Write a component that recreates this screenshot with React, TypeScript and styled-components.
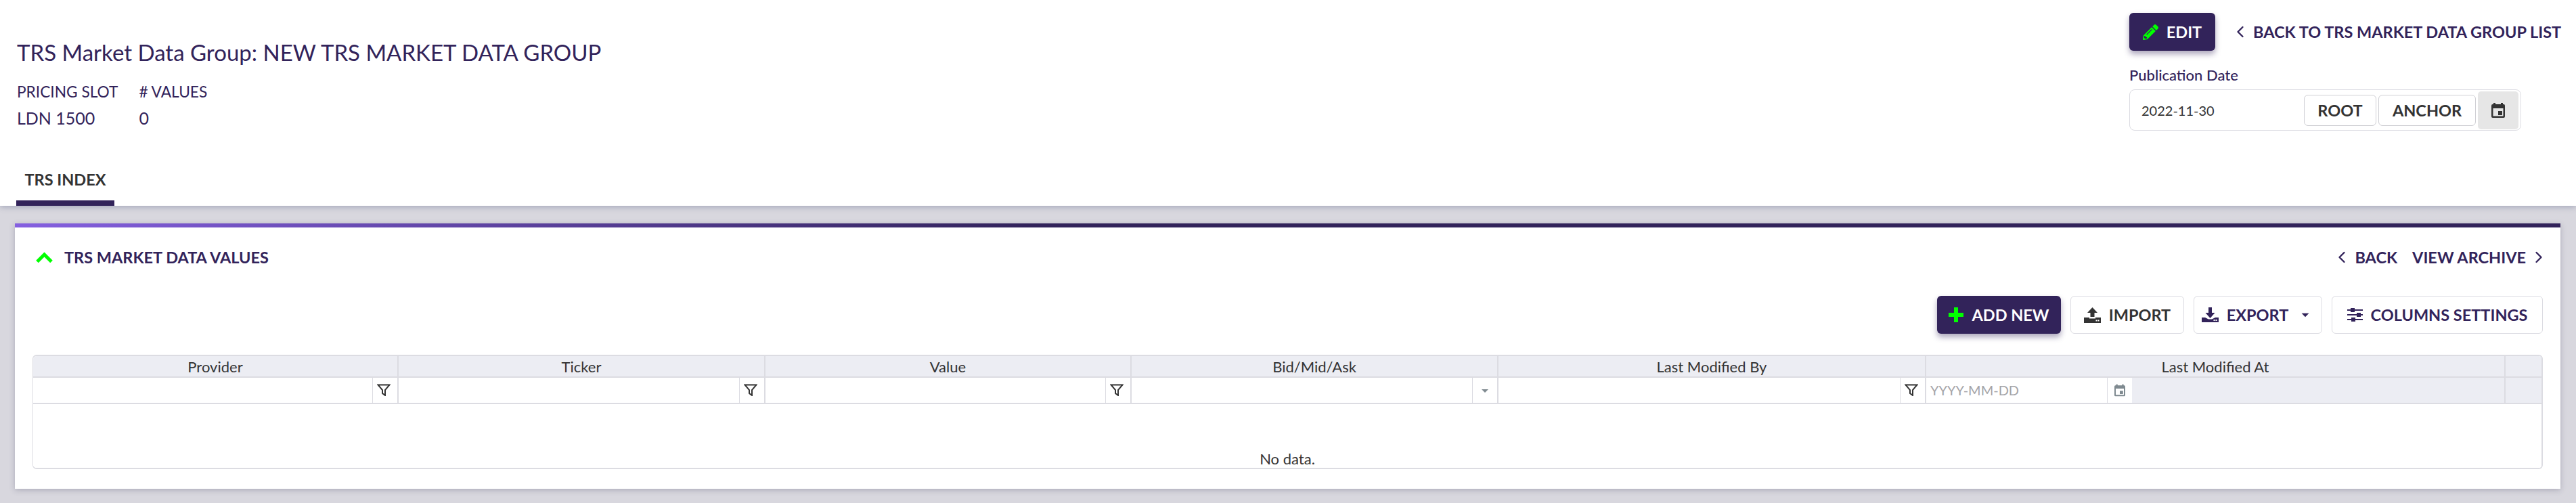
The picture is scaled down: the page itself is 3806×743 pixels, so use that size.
import React from 'react';
import styled, { createGlobalStyle } from 'styled-components';
import { ChevronLeft, ChevronRight } from 'lucide-react';
import { FaPencilAlt } from 'react-icons/fa';
import { MdArrowDropDown } from 'react-icons/md';

const primary = '#32235a';
const green = '#00ff00';
const line = '#dcdce2';
const headBg = '#ecedf3';
const ink = '#333333';

const GlobalStyle = createGlobalStyle`
  html, body { margin: 0; padding: 0; background: #d8d7de; }
  body { font-family: "Lato", "Liberation Sans", sans-serif; color: ${primary}; overflow: hidden; }
  * { box-sizing: border-box; }
`;

const Page = styled.div`
  width: 3806px;
  height: 743px;
  display: flex;
  flex-direction: column;
  background: #d8d7de;
`;

const Header = styled.header`
  height: 304px;
  background: #fff;
  display: flex;
  justify-content: space-between;
  padding: 0 25px 0 24px;
  box-shadow: 0 2px 8px rgba(70, 80, 120, 0.35);
  position: relative;
`;

const HeaderLeft = styled.div`
  display: flex;
  flex-direction: column;
`;

const Title = styled.h1`
  margin: 58px 0 0 1px;
  font-size: 33px;
  line-height: 38px;
  font-weight: 400;
  color: ${primary};
`;

const Facts = styled.div`
  display: flex;
  gap: 31px;
  margin: 26px 0 0 1px;
`;

const Fact = styled.div`
  display: flex;
  flex-direction: column;
  gap: 9px;
`;

const FactLabel = styled.div`
  font-size: 22.7px;
  line-height: 28px;
`;

const FactValue = styled.div`
  font-size: 25px;
  line-height: 30px;
`;

const Tab = styled.div`
  margin-top: auto;
  width: 145px;
  height: 56px;
  padding-top: 3px;
  text-align: center;
  font-size: 23.5px;
  line-height: 28px;
  font-weight: 700;
  color: ${ink};
  border-bottom: 8px solid ${primary};
`;

const HeaderRight = styled.div`
  width: 635px;
  padding-top: 19px;
`;

const TopActions = styled.div`
  display: flex;
  align-items: center;
  gap: 23px;
`;

const Button = styled.button<{ $primary?: boolean; $ink?: boolean; $width: number }>`
  flex: none;
  width: ${(p) => p.$width}px;
  height: 56px;
  display: flex;
  align-items: center;
  justify-content: center;
  gap: 12px;
  padding: 0;
  font-family: inherit;
  font-size: 23.5px;
  font-weight: 700;
  border-radius: 6px;
  color: ${(p) => (p.$primary ? '#fff' : p.$ink ? ink : primary)};
  background: ${(p) => (p.$primary ? primary : '#fff')};
  border: ${(p) => (p.$primary ? 'none' : `1px solid ${line}`)};
  box-shadow: ${(p) => (p.$primary ? '0 5px 8px rgba(50, 35, 90, 0.4)' : 'none')};
  svg { flex: none; }
`;

const TextLink = styled.a`
  display: flex;
  align-items: center;
  gap: 5px;
  font-size: 23.5px;
  font-weight: 700;
  color: ${primary};
  white-space: nowrap;
`;

const DateLabel = styled.div`
  margin-top: 21px;
  font-size: 22px;
  line-height: 30px;
  font-weight: 500;
`;

const DateGroup = styled.div`
  margin-top: 6px;
  width: 579px;
  height: 61px;
  display: flex;
  align-items: center;
  padding: 2px 3px 2px 17px;
  border: 1px solid ${line};
  border-radius: 8px;
`;

const DateValue = styled.div`
  flex: 1;
  font-size: 20px;
  color: ${ink};
`;

const GroupButton = styled.button<{ $width: number }>`
  width: ${(p) => p.$width}px;
  height: 46px;
  margin-right: 3px;
  background: #fff;
  border: 1px solid #cfcfd4;
  border-radius: 6px;
  font-family: inherit;
  font-size: 23.5px;
  font-weight: 700;
  color: ${ink};
`;

const CalendarButton = styled.div`
  width: 60px;
  height: 56px;
  display: flex;
  align-items: center;
  justify-content: center;
  background: #e6e6e6;
  border-radius: 5px;
`;

const Card = styled.section`
  margin: 26px 23px 0 22px;
  height: 392px;
  background: #fff;
  padding: 6px 26px 0;
  position: relative;
  box-shadow: 0 2px 8px rgba(70, 70, 100, 0.3);
  &::before {
    content: '';
    position: absolute;
    top: 0;
    left: 0;
    right: 0;
    height: 6px;
    background: linear-gradient(90deg, #8560e0 0%, ${primary} 40%);
  }
`;

const CardHead = styled.div`
  height: 64px;
  padding-top: 30px;
  display: flex;
  align-items: flex-start;
  justify-content: space-between;
`;

const CardTitle = styled.div`
  display: flex;
  align-items: center;
  gap: 17px;
  margin-left: 5px;
  font-size: 23.5px;
  line-height: 28px;
  font-weight: 700;
`;

const CardNav = styled.div`
  display: flex;
  gap: 22px;
  height: 28px;
  margin-right: -8px;
`;

const Toolbar = styled.div`
  margin-top: 37px;
  display: flex;
  justify-content: flex-end;
  gap: 14px;
`;

const Table = styled.div`
  margin-top: 31px;
  height: 169px;
  border: 1px solid ${line};
  border-width: 2px 2px 2px 1px;
  border-radius: 6px;
  overflow: hidden;
`;

const Row = styled.div<{ $filter?: boolean }>`
  display: grid;
  grid-template-columns: 540px 542px 541px 542px 632px 856px 1fr;
  height: ${(p) => (p.$filter ? 39 : 32)}px;
  background: ${headBg};
  border-bottom: 2px solid ${line};
`;

const HeadCell = styled.div`
  display: flex;
  align-items: center;
  justify-content: center;
  font-size: 22px;
  color: ${ink};
  border-right: 2px solid ${line};
  &:last-child { border-right: none; }
`;

const FilterCell = styled.div<{ $empty?: boolean }>`
  display: flex;
  height: 37px;
  background: ${(p) => (p.$empty ? headBg : '#fff')};
  border-right: 2px solid ${line};
  &:last-child { border-right: none; }
`;

const FilterInput = styled.div`
  flex: 1;
  font-size: 20px;
  line-height: 36px;
  padding-left: 6px;
  color: #a4a4a8;
`;

const FilterButton = styled.div<{ $funnel?: boolean }>`
  width: 37px;
  display: flex;
  align-items: center;
  justify-content: center;
  border-left: 1px solid ${line};
  padding: ${(p) => (p.$funnel ? '0 4px 2px 0' : '0')};
`;

const DateFilter = styled.div`
  display: flex;
  width: 304px;
  background: #fff;
`;

const Spacer = styled.div`
  flex: 1;
  background: ${headBg};
`;

const Empty = styled.div`
  height: 94px;
  display: flex;
  align-items: flex-end;
  justify-content: center;
  font-size: 22px;
  line-height: 26px;
  color: ${ink};
  background: #fff;
`;

const CollapseIcon = () => (
  <svg width="25" height="16" viewBox="0 0 25 16" fill="none" stroke={green} strokeWidth="5">
    <path d="M2 14.5L12.5 4l10.5 10.5" />
  </svg>
);

const PlusIcon = () => (
  <svg width="22" height="22" viewBox="0 0 22 22" fill={green}>
    <path d="M8 0h6v8h8v6h-8v8H8v-8H0V8h8z" />
  </svg>
);

const Funnel = () => (
  <svg width="20" height="18" viewBox="0 0 20 18" fill="none" stroke="#333" strokeWidth="2">
    <path d="M1.5 1.5h17L12 9v8l-4-3V9z" />
  </svg>
);

const UploadIcon = () => (
  <svg width="25" height="23" viewBox="0 0 25 23" fill={ink}>
    <path d="M12.5 0l7.5 8h-4.5v6h-6V8H5z" />
    <path d="M0 15h8v1.5h9V15h8v8H0z" />
    <path d="M17.5 18.5h2v2h-2zM20.5 18.5h2v2h-2z" fill="#fff" />
  </svg>
);

const DownloadIcon = () => (
  <svg width="25" height="22" viewBox="0 0 25 22" fill={primary}>
    <path d="M10 0h5v8h4.5l-7 8-7-8H10z" />
    <path d="M0 15h5l5 2.5h5l5-2.5h5v7H0z" />
    <path d="M17.5 18h2v2h-2zM20.5 18h2v2h-2z" fill="#fff" />
  </svg>
);

const SlidersIcon = () => (
  <svg width="23" height="22" viewBox="0 0 23 22" fill={primary}>
    <path d="M0 3h23v2H0zM0 10h23v2H0zM0 17h23v2H0z" />
    <path d="M5 1h6v6H5zM14 8h6v6h-6zM6 15h6v6H6z" />
  </svg>
);

const CalendarIcon = ({ color, width, height }: { color: string; width: number; height: number }) => (
  <svg width={width} height={height} viewBox="0 0 20 22" fill={color}>
    <path d="M3 0h3v2h8V0h3v2h1a2 2 0 0 1 2 2v16a2 2 0 0 1-2 2H2a2 2 0 0 1-2-2V4a2 2 0 0 1 2-2h1zM2.5 8v11.5h15V8z" />
    <path d="M10 12h6v6h-6z" />
  </svg>
);

const App = () => {
  const columns = ['Provider', 'Ticker', 'Value', 'Bid/Mid/Ask', 'Last Modified By', 'Last Modified At', ''];
  return (
    <Page>
      <GlobalStyle />
      <Header>
        <HeaderLeft>
          <Title>TRS Market Data Group: NEW TRS MARKET DATA GROUP</Title>
          <Facts>
            <Fact>
              <FactLabel>PRICING SLOT</FactLabel>
              <FactValue>LDN 1500</FactValue>
            </Fact>
            <Fact>
              <FactLabel># VALUES</FactLabel>
              <FactValue>0</FactValue>
            </Fact>
          </Facts>
          <Tab>TRS INDEX</Tab>
        </HeaderLeft>
        <HeaderRight>
          <TopActions>
            <Button $primary $width={127}>
              <FaPencilAlt size={23} color={green} />
              EDIT
            </Button>
            <TextLink>
              <ChevronLeft size={28} />
              BACK TO TRS MARKET DATA GROUP LIST
            </TextLink>
          </TopActions>
          <DateLabel>Publication Date</DateLabel>
          <DateGroup>
            <DateValue>2022-11-30</DateValue>
            <GroupButton $width={107}>ROOT</GroupButton>
            <GroupButton $width={144}>ANCHOR</GroupButton>
            <CalendarButton>
              <CalendarIcon color={ink} width={20} height={22} />
            </CalendarButton>
          </DateGroup>
        </HeaderRight>
      </Header>
      <Card>
        <CardHead>
          <CardTitle>
            <CollapseIcon />
            TRS MARKET DATA VALUES
          </CardTitle>
          <CardNav>
            <TextLink>
              <ChevronLeft size={28} />
              BACK
            </TextLink>
            <TextLink>
              VIEW ARCHIVE
              <ChevronRight size={28} />
            </TextLink>
          </CardNav>
        </CardHead>
        <Toolbar>
          <Button $primary $width={183}>
            <PlusIcon />
            ADD NEW
          </Button>
          <Button $ink $width={168}>
            <UploadIcon />
            IMPORT
          </Button>
          <Button $width={190}>
            <DownloadIcon />
            EXPORT
            <MdArrowDropDown size={26} />
          </Button>
          <Button $width={312}>
            <SlidersIcon />
            COLUMNS SETTINGS
          </Button>
        </Toolbar>
        <Table>
          <Row>
            {columns.map((c, i) => (
              <HeadCell key={i}>{c}</HeadCell>
            ))}
          </Row>
          <Row $filter>
            {[0, 1, 2].map((i) => (
              <FilterCell key={i}>
                <FilterInput />
                <FilterButton $funnel><Funnel /></FilterButton>
              </FilterCell>
            ))}
            <FilterCell>
              <FilterInput />
              <FilterButton><MdArrowDropDown size={24} color="#7f8a90" /></FilterButton>
            </FilterCell>
            <FilterCell>
              <FilterInput />
              <FilterButton $funnel><Funnel /></FilterButton>
            </FilterCell>
            <FilterCell>
              <DateFilter>
                <FilterInput>YYYY-MM-DD</FilterInput>
                <FilterButton><CalendarIcon color="#7f8a90" width={16} height={19} /></FilterButton>
              </DateFilter>
              <Spacer />
            </FilterCell>
            <FilterCell $empty />
          </Row>
          <Empty>No data.</Empty>
        </Table>
      </Card>
    </Page>
  );
};

export default App;
